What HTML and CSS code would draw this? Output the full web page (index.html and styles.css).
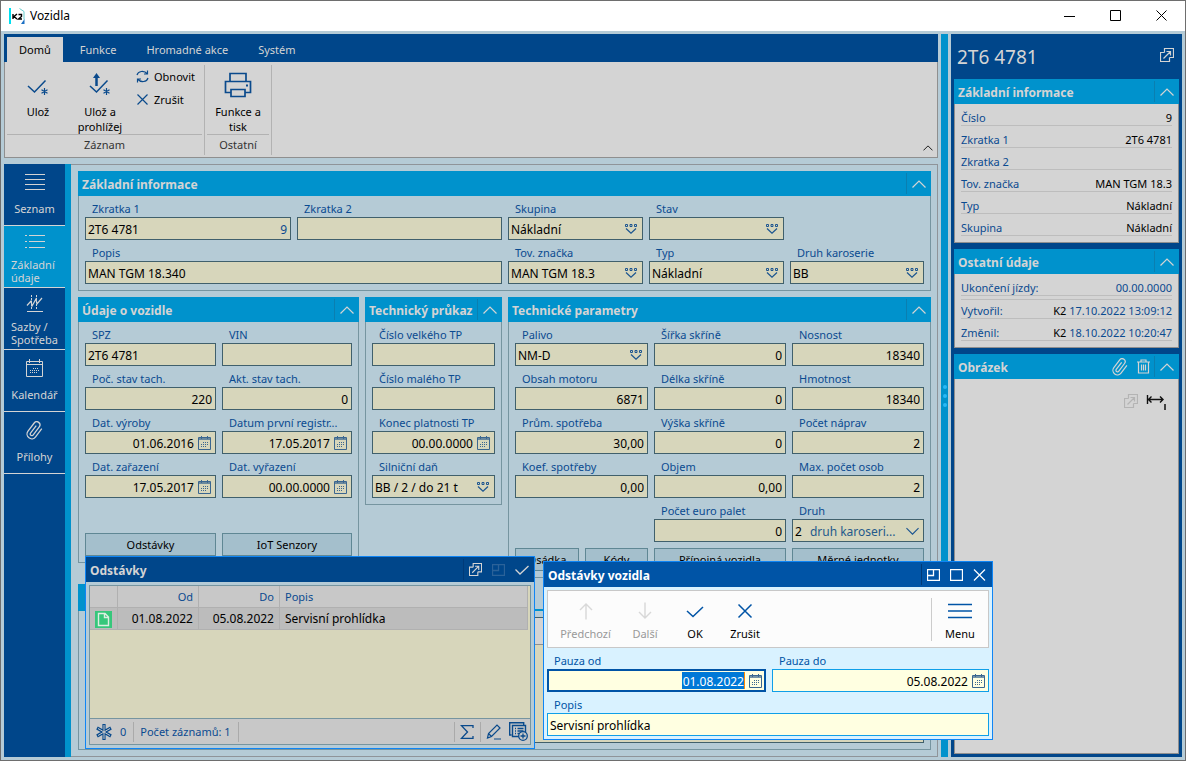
FILE: index.html
```html
<!DOCTYPE html>
<html lang="cs">
<head>
<meta charset="utf-8">
<title>Vozidla</title>
<link rel="stylesheet" href="styles.css">
</head>
<body>
<svg class="sprite" aria-hidden="true">
  <symbol id="cal" viewBox="0 0 13 14">
    <path d="M.5 1.500h12v12H.5z" fill="none" stroke="currentColor"/>
    <path d="M1 3h11" fill="none" stroke="currentColor" stroke-width="2" opacity=".7"/>
    <path d="M3.500 0v3M9.500 0v3" stroke="currentColor"/>
    <path d="M5 6.500h6M3 8.500h8M3 10.500h6" fill="none" stroke="currentColor" stroke-dasharray="1 1"/>
  </symbol>
  <symbol id="look" viewBox="0 0 13 10">
    <path d="M.5 .5h2v2h-2zM5 .5h2v2H5zM9.500 .5h2v2h-2z" fill="none" stroke="currentColor"/>
    <path d="M1 4.500l5 4.700 5-4.700" fill="none" stroke="currentColor" stroke-width="1.200"/>
  </symbol>
  <symbol id="up" viewBox="0 0 14 8"><path d="M.5 7.500L7 1l6.500 6.500" fill="none" stroke="currentColor" stroke-width="1.200"/></symbol>
  <symbol id="out" viewBox="0 0 14 14">
    <path d="M4.500 4.500h-4v9h9v-4M4.500 4.500v-4h9v9h-4M3.500 10.500l6.500-6.500M6.500 3.500h4v4" fill="none" stroke="currentColor" stroke-width="1.200"/>
  </symbol>
  <symbol id="clip" viewBox="0 0 24 24">
    <path d="M21.440 11.050l-9.190 9.190a6 6 0 0 1-8.490-8.490l9.190-9.190a4 4 0 0 1 5.660 5.660l-9.200 9.190a2 2 0 0 1-2.830-2.830l8.490-8.480" fill="none" stroke="currentColor" stroke-width="1.600" transform="rotate(-8 12 12)"/>
  </symbol>
  <symbol id="split" viewBox="0 0 13 12"><path d="M.5.500h12v11H.5zM.5 6.500h6v-6" fill="none" stroke="currentColor" stroke-width="1.300"/></symbol>
</svg>

<div class="window">
  <header class="titlebar">
    <svg class="logo" width="16" height="17" viewBox="0 0 16 17">
      <path d="M0 0h2v16H0z" fill="#00dff0"/>
      <path d="M10.500.5l4.500 3v8" fill="none" stroke="#6cc" />
      <path d="M12 16l3.500-5v5z" fill="#1a6fc4"/>
      <path d="M4 6v5M8 6L5 8.500 8 11M9.500 6.500H12.500v2l-3 2.500h3.500" fill="none" stroke="#000" stroke-width="1.400"/>
    </svg>
    <h1>Vozidla</h1>
    <button aria-label="Minimalizovat"><svg width="12" height="12"><path d="M0 6.500h11" stroke="#000"/></svg></button>
    <button aria-label="Maximalizovat"><svg width="12" height="12"><path d="M.5.500h10v10H.5z" fill="none" stroke="#000"/></svg></button>
    <button aria-label="Zavřít"><svg width="12" height="12"><path d="M.5.500l10 10M10.500.500l-10 10" stroke="#000"/></svg></button>
  </header>

  <div class="workspace">
    <div class="left">
      <div class="ribbon">
        <nav class="tabs">
          <button class="tab on">Domů</button><button class="tab">Funkce</button><button class="tab">Hromadné akce</button><button class="tab">Systém</button>
        </nav>
        <div class="ribbon-body">
          <section class="group">
            <div class="tools">
              <button class="tool save"><svg width="28" height="28" viewBox="0 0 28 28"><path d="M4 15l6.500 6L21.500 9.500" fill="none" stroke="#0a4a8c" stroke-width="1.500"/><path d="M20.500 17v7M17.500 18.700l6 3.500M23.500 18.700l-6 3.500" stroke="#0a4a8c" stroke-width="1.200"/></svg>Ulož</button>
              <button class="tool view"><svg width="28" height="28" viewBox="0 0 28 28"><path d="M4 15l6.500 6L21.500 9.500" fill="none" stroke="#0a4a8c" stroke-width="1.500"/><path d="M10.500 15V5" stroke="#0a4a8c" stroke-width="2.500"/><path d="M7 7l3.500-5L14 7z" fill="#0a4a8c"/><path d="M20.500 17v7M17.500 18.700l6 3.500M23.500 18.700l-6 3.500" stroke="#0a4a8c" stroke-width="1.200"/></svg>Ulož a prohlížej</button>
              <div class="minis">
                <button class="mini"><svg width="13" height="13" viewBox="0 0 13 13"><path d="M1 5c1-4 7-5 10.500-1M11.500.500V4H8M12 8c-1 4-7 5-10.500 1M1.500 12.500V9H5" fill="none" stroke="#0a4a8c" stroke-width="1.200"/></svg>Obnovit</button>
                <button class="mini"><svg width="13" height="13" viewBox="0 0 13 13"><path d="M1.500 1.500l10 10M11.500 1.500l-10 10" stroke="#0a4a8c" stroke-width="1.200"/></svg>Zrušit</button>
              </div>
            </div>
            <h2>Záznam</h2>
          </section>
          <section class="group">
            <div class="tools">
              <button class="tool print"><svg width="28" height="28" viewBox="0 0 28 28"><path d="M6 10V2.500h16V10M6.500 21.500H1.500V10.500h25v11h-5M7 18.500h14v7H7z" fill="none" stroke="#0a4a8c" stroke-width="1.700"/><path d="M22 14.500h2" stroke="#0a4a8c" stroke-width="2"/></svg>Funkce a tisk</button>
            </div>
            <h2>Ostatní</h2>
          </section>
          <button class="fold" aria-label="Sbalit pás"><svg width="10" height="6" viewBox="0 0 14 8"><use href="#up"/></svg></button>
        </div>
      </div>

      <div class="main">
        <nav class="side">
          <a href="#seznam"><svg width="22" height="19" viewBox="0 0 22 19"><path d="M1 1.500h20M1 6.500h20M1 11.500h20M1 16.500h20" stroke="currentColor" stroke-width="1.200"/></svg><span>Seznam</span></a>
          <a href="#udaje" class="on wide"><svg width="22" height="19" viewBox="0 0 22 19"><path d="M5 2.500h16M5 8.500h16M5 14.500h16M1 2.500h2M1 8.500h2M1 14.500h2" stroke="currentColor"/></svg><span>Základní údaje</span></a>
          <a href="#sazby" class="wide"><svg width="17" height="19" viewBox="0 0 17 19"><path d="M1 16.500h16" stroke="currentColor"/><path d="M1 10.500l4-4.500 1 5 4-7 1 5 5-6" fill="none" stroke="currentColor" stroke-width="1.200"/><path d="M5.500 0v15M10.500 0v15" stroke="currentColor" stroke-dasharray="2 1"/></svg><span>Sazby / Spotřeba</span></a>
          <a href="#kalendar"><svg width="17" height="19" viewBox="0 0 17 19"><path d="M.5 2.500h16v15H.5zM.5 5.500h16M3.500 0v4M13.500 0v4" fill="none" stroke="currentColor"/><path d="M7 9.500h6M4 11.500h9M4 13.500h7" fill="none" stroke="currentColor" stroke-dasharray="1 1"/></svg><span>Kalendář</span></a>
          <a href="#prilohy"><svg width="19" height="19"><use href="#clip"/></svg><span>Přílohy</span></a>
        </nav>

        <div class="content">
          <section class="panel">
            <h2><span>Základní informace</span><button aria-label="Sbalit"><svg width="14" height="8"><use href="#up"/></svg></button></h2>
            <div class="body g5">
              <label>Zkratka 1<span class="f"><input value="2T6 4781"><em>9</em></span></label>
              <label>Zkratka 2<span class="f"><input></span></label>
              <label>Skupina<span class="f"><input value="Nákladní"><svg class="lk"><use href="#look"/></svg></span></label>
              <label>Stav<span class="f"><input><svg class="lk"><use href="#look"/></svg></span></label>
              <i></i>
              <label class="s2">Popis<span class="f"><input value="MAN TGM 18.340"></span></label>
              <label>Tov. značka<span class="f"><input value="MAN TGM 18.3"><svg class="lk"><use href="#look"/></svg></span></label>
              <label>Typ<span class="f"><input value="Nákladní"><svg class="lk"><use href="#look"/></svg></span></label>
              <label>Druh karoserie<span class="f"><input value="BB"><svg class="lk"><use href="#look"/></svg></span></label>
            </div>
          </section>

          <div class="trio">
            <section class="panel">
              <h2><span>Údaje o vozidle</span><button aria-label="Sbalit"><svg width="14" height="8"><use href="#up"/></svg></button></h2>
              <div class="body g2">
                <label>SPZ<span class="f"><input value="2T6 4781"></span></label>
                <label>VIN<span class="f"><input></span></label>
                <label>Poč. stav tach.<span class="f n"><input value="220"></span></label>
                <label>Akt. stav tach.<span class="f n"><input value="0"></span></label>
                <label>Dat. výroby<span class="f n"><input value="01.06.2016"><svg class="cl"><use href="#cal"/></svg></span></label>
                <label>Datum první registr...<span class="f n"><input value="17.05.2017"><svg class="cl"><use href="#cal"/></svg></span></label>
                <label>Dat. zařazení<span class="f n"><input value="17.05.2017"><svg class="cl"><use href="#cal"/></svg></span></label>
                <label>Dat. vyřazení<span class="f n"><input value="00.00.0000"><svg class="cl"><use href="#cal"/></svg></span></label>
                <button class="btn low">Odstávky</button><button class="btn low">IoT Senzory</button>
              </div>
            </section>
            <section class="panel">
              <h2><span>Technický průkaz</span><button aria-label="Sbalit"><svg width="14" height="8"><use href="#up"/></svg></button></h2>
              <div class="body">
                <label>Číslo velkého TP<span class="f"><input></span></label>
                <label>Číslo malého TP<span class="f"><input></span></label>
                <label>Konec platnosti TP<span class="f n"><input value="00.00.0000"><svg class="cl"><use href="#cal"/></svg></span></label>
                <label>Silniční daň<span class="f"><input value="BB / 2 / do 21 t"><svg class="lk"><use href="#look"/></svg></span></label>
              </div>
            </section>
            <section class="panel">
              <h2><span>Technické parametry</span><button aria-label="Sbalit"><svg width="14" height="8"><use href="#up"/></svg></button></h2>
              <div class="body g3">
                <label>Palivo<span class="f"><input value="NM-D"><svg class="lk"><use href="#look"/></svg></span></label>
                <label>Šířka skříně<span class="f n"><input value="0"></span></label>
                <label>Nosnost<span class="f n"><input value="18340"></span></label>
                <label>Obsah motoru<span class="f n"><input value="6871"></span></label>
                <label>Délka skříně<span class="f n"><input value="0"></span></label>
                <label>Hmotnost<span class="f n"><input value="18340"></span></label>
                <label>Prům. spotřeba<span class="f n"><input value="30,00"></span></label>
                <label>Výška skříně<span class="f n"><input value="0"></span></label>
                <label>Počet náprav<span class="f n"><input value="2"></span></label>
                <label>Koef. spotřeby<span class="f n"><input value="0,00"></span></label>
                <label>Objem<span class="f n"><input value="0,00"></span></label>
                <label>Max. počet osob<span class="f n"><input value="2"></span></label>
                <i></i>
                <label>Počet euro palet<span class="f n"><input value="0"></span></label>
                <label>Druh<span class="f sel"><b>2</b><select><option>druh karoseri...</option></select><svg class="dn" width="13" height="8" viewBox="0 0 14 8"><path d="M.5 1L7 7.500 13.500 1" fill="none" stroke="currentColor" stroke-width="1.200"/></svg></span></label>
                <div class="pair"><button class="btn">Osádka</button><button class="btn">Kódy</button></div>
                <button class="btn">Přípojná vozidla</button><button class="btn">Měrné jednotky</button>
              </div>
            </section>
          </div>

          <section class="sheet">
            <div class="sheet-tab"></div>
            <div class="sheet-body"><div class="sheet-grid"><div class="sheet-head"></div></div></div>
          </section>
        </div>
      </div>
    </div>

    <div class="splitter"><i></i><i></i><i></i></div>

    <aside class="preview">
      <header><h2>2T6 4781</h2><button aria-label="Otevřít"><svg width="14" height="14"><use href="#out"/></svg></button></header>
      <section class="panel">
        <h2><span>Základní informace</span><button aria-label="Sbalit"><svg width="14" height="8"><use href="#up"/></svg></button></h2>
        <dl class="body">
          <div><dt>Číslo</dt><dd>9</dd></div>
          <div><dt>Zkratka 1</dt><dd>2T6 4781</dd></div>
          <div><dt>Zkratka 2</dt><dd></dd></div>
          <div><dt>Tov. značka</dt><dd>MAN TGM 18.3</dd></div>
          <div><dt>Typ</dt><dd>Nákladní</dd></div>
          <div><dt>Skupina</dt><dd>Nákladní</dd></div>
        </dl>
      </section>
      <section class="panel">
        <h2><span>Ostatní údaje</span><button aria-label="Sbalit"><svg width="14" height="8"><use href="#up"/></svg></button></h2>
        <dl class="body">
          <div><dt>Ukončení jízdy:</dt><dd><a href="#d">00.00.0000</a></dd></div>
          <div class="gap"></div>
          <div class="tight"><dt>Vytvořil:</dt><dd>K2 <a href="#d">17.10.2022 13:09:12</a></dd></div>
          <div><dt>Změnil:</dt><dd>K2 <a href="#d">18.10.2022 10:20:47</a></dd></div>
        </dl>
      </section>
      <section class="panel grow">
        <h2><span>Obrázek</span>
          <svg width="18" height="18"><use href="#clip"/></svg>
          <svg class="bin" width="13" height="15" viewBox="0 0 13 15"><path d="M0 3h13M4 3V1h5v2M1.500 3v11h10V3M4.500 5.500v6M6.500 5.500v6M8.500 5.500v6" fill="none" stroke="currentColor" stroke-width="1.200"/></svg>
          <button aria-label="Sbalit"><svg width="14" height="8"><use href="#up"/></svg></button></h2>
        <div class="body picture">
          <svg class="dim" width="14" height="14"><use href="#out"/></svg>
          <svg width="20" height="16" viewBox="0 0 20 16"><path d="M1.500 1v9M2 5.500h15M5.500 2.500l-3 3 3 3M14 2.500l3 3-3 3" fill="none" stroke="#111" stroke-width="1.400"/><path d="M19 10v6" stroke="#111" stroke-width="1.500"/></svg>
        </div>
      </section>
    </aside>
  </div>

  <section class="popup list">
    <h2><span>Odstávky</span><i class="bar"></i>
      <button aria-label="Otevřít"><svg width="13" height="13"><use href="#out"/></svg></button>
      <button class="off" aria-label="Rozdělit"><svg width="13" height="12"><use href="#split"/></svg></button>
      <button aria-label="Potvrdit"><svg width="14" height="10" viewBox="0 0 14 10"><path d="M.5 4.500L5 9l8.500-8" fill="none" stroke="currentColor" stroke-width="1.300"/></svg></button></h2>
    <div class="frame">
      <table>
        <colgroup><col class="c1"><col class="c2"><col class="c2"><col></colgroup>
        <thead><tr><th></th><th class="r">Od</th><th class="r">Do</th><th>Popis</th></tr></thead>
        <tbody><tr><td><svg class="doc" width="17" height="17" viewBox="0 0 17 17"><path d="M0 0h17v17H0z" fill="#36c77b"/><path d="M3.500 2.500h6.500l3.500 3.500v8.500h-10zM9.500 2.500v4h4" fill="none" stroke="#dceee2" stroke-width="1.400"/></svg></td><td class="r">01.08.2022</td><td class="r">05.08.2022</td><td>Servisní prohlídka</td></tr></tbody>
      </table>
      <footer>
        <svg width="16" height="16" viewBox="0 0 16 16"><path d="M8 0v16M1 4l14 8M15 4L1 12" stroke="#0a4a8c" stroke-width="3.200"/><path d="M8 1v14M2 4.500l12 7M14 4.500l-12 7" stroke="#c8c8c8" stroke-width="1"/></svg>
        <span class="num">0</span><span class="count">Počet záznamů: 1</span>
        <span class="sum"><svg width="14" height="14" viewBox="0 0 14 14"><path d="M13 3V.7H1.500l6 6.300-6 6.300H13V11" fill="none" stroke="#0a4a8c" stroke-width="1.300"/></svg></span>
        <svg class="pen" width="16" height="16" viewBox="0 0 16 16"><path d="M1.500 14l1-4.500L11 1l3 3-8.500 8.500zM2.500 9.500l3 3M8 15h7" fill="none" stroke="#0a4a8c" stroke-width="1.200"/></svg>
        <svg class="add" width="19" height="19" viewBox="0 0 19 19"><path d="M2.500 13H.7V.7h14V3M3.500 3.500h13v11h-13zM6 6.500h1M8.500 6.500h6M6 9h1M8.500 9h6M6 11.500h1M8.500 11.500h3" fill="none" stroke="#0a4a8c" stroke-width="1.400"/><circle cx="14" cy="14" r="4.300" fill="#c8c8c8" stroke="#0a4a8c" stroke-width="1.300"/><path d="M11.500 14h5M14 11.500v5" stroke="#0a4a8c" stroke-width="1.300"/></svg>
      </footer>
    </div>
  </section>

  <section class="popup dialog">
    <h2><span>Odstávky vozidla</span><i class="bar"></i>
      <button aria-label="Rozdělit"><svg width="13" height="12"><use href="#split"/></svg></button>
      <button aria-label="Maximalizovat"><svg width="13" height="12" viewBox="0 0 13 12"><path d="M.5.500h12v11H.5z" fill="none" stroke="currentColor" stroke-width="1.300"/></svg></button>
      <button aria-label="Zavřít"><svg width="13" height="12" viewBox="0 0 13 12"><path d="M1 .5l11 11M12 .5l-11 11" stroke="currentColor" stroke-width="1.200"/></svg></button></h2>
    <div class="toolbar">
      <button class="b1" disabled><svg width="16" height="18"><path d="M8 17.500V2M2 8l6-6 6 6" fill="none" stroke="#d8d8d8" stroke-width="1.400"/></svg>Předchozí</button>
      <button class="b2" disabled><svg width="16" height="18"><path d="M8 .5V16M2 10l6 6 6-6" fill="none" stroke="#d8d8d8" stroke-width="1.400"/></svg>Další</button>
      <button class="b3"><svg width="18" height="18"><path d="M1 9l6 5.500L17 5" fill="none" stroke="#0054a6" stroke-width="1.500"/></svg>OK</button>
      <button class="b4"><svg width="16" height="18"><path d="M1.500 2.500l13 13M14.500 2.500l-13 13" stroke="#0054a6" stroke-width="1.500"/></svg>Zrušit</button>
      <button class="menu"><svg width="24" height="18"><path d="M0 2.500h24M0 9h24M0 15.500h24" stroke="#0054a6" stroke-width="1.500"/></svg>Menu</button>
    </div>
    <div class="form">
      <label>Pauza od<span class="f n focus"><input class="picked" value="01.08.2022"><svg class="cl"><use href="#cal"/></svg></span></label>
      <label>Pauza do<span class="f n"><input value="05.08.2022"><svg class="cl"><use href="#cal"/></svg></span></label>
      <label class="s2">Popis<span class="f"><input value="Servisní prohlídka"></span></label>
    </div>
  </section>
</div>
</body>
</html>
```
FILE: styles.css
```css
* { box-sizing: border-box; margin: 0; padding: 0; }
:root {
  --navy: #00468a;
  --cyan: #0092cc;
  --pale: #b5cbd6;
  --gray: #d4d4d4;
  --field: #d7d6bb;
}
body { font: 12px/16px "Noto Sans", "Open Sans", sans-serif; color: #000; }
button, input, select { font: inherit; color: inherit; background: none; border: 0; }
input, select { min-width: 0; outline: 0; }
a { color: inherit; text-decoration: none; }
svg { flex: none; }
.sprite { display: none; }

.window { position: relative; display: flex; flex-direction: column; height: 100vh; overflow: hidden; border: 1px solid #6e6e6e; background: var(--pale); }
.titlebar { display: flex; align-items: center; height: 30px; padding-left: 8px; background: #fff; }
.titlebar h1 { flex: 1; margin-left: 5px; font-size: 12px; font-weight: 400; }
.titlebar button { width: 46px; height: 28px; line-height: 0; }

.workspace { flex: 1; min-height: 0; display: flex; gap: 3px; padding: 3px; }
.left { flex: 1; min-width: 0; display: flex; flex-direction: column; gap: 6px; }

.tabs { display: flex; height: 28px; padding: 3px 3px 0; background: var(--navy); }
.tab { padding: 0 15px; color: var(--gray); font-size: 11px; }
.tab.on { padding: 0 12px; margin-right: 2px; background: var(--gray); color: #000; }
.ribbon-body { position: relative; display: flex; height: 96px; padding: 3px 3px 2px 2px; border: 1px solid #8f8f8f; border-top: 0; background: var(--gray); }
.group { display: flex; flex-direction: column; padding-right: 2px; margin-right: 2px; border-right: 1px solid #b2b2b2; }
.tools { display: flex; flex: 1; border-bottom: 1px solid #b2b2b2; }
.group h2 { height: 20px; font-size: 11px; line-height: 20px; font-weight: 400; color: #333; text-align: center; }
.tool { display: flex; flex-direction: column; align-items: center; justify-content: flex-start; padding-top: 6px; font-size: 11px; line-height: 15px; }
.tool svg { margin-bottom: 5px; }
.save, .view, .print { width: 62px; }
.minis { width: 71px; display: flex; flex-direction: column; padding-left: 5px; }
.mini { display: flex; align-items: center; gap: 5px; height: 23px; font-size: 11px; }
.fold { position: absolute; right: 4px; bottom: 6px; line-height: 0; }

.main { flex: 1; min-height: 0; display: flex; }
.side { width: 67px; border-right: 6px solid var(--cyan); background: var(--navy); color: var(--gray); font-size: 11px; line-height: 13px; }
.side a { display: flex; flex-direction: column; align-items: center; height: 62px; padding-top: 9px; border-bottom: 1px solid var(--gray); }
.side a.on { background: var(--cyan); }
.side span { margin-top: 10px; }
.side .wide { padding-top: 7px; }
.side .wide span { align-self: stretch; padding-left: 7px; margin-top: 6px; }

.content { flex: 1; min-width: 0; display: flex; flex-direction: column; gap: 6px; padding: 6px 6px 6px 7px; border: 1px solid #8f9499; border-left: 0; }
.panel > h2 { display: flex; align-items: center; height: 25px; padding-left: 4px; background: var(--cyan); color: var(--gray); font-size: 12px; white-space: nowrap; }
.panel > h2 span { flex: 1; min-width: 0; padding-top: 2px; }
.panel > h2 button { width: 25px; height: 21px; padding-right: 1px; border-left: 1px solid #0a7fb0; line-height: 0; }
.panel .body { padding: 0 6px 6px; border: 1px solid #7695a0; border-top: 0; }
.g5, .g2, .g3 { display: grid; column-gap: 6px; }
.g5 { grid-template-columns: 206fr 205fr 135fr 135fr 134fr; }
.g2 { grid-template-columns: 131fr 130fr; }
.g3 { grid-template-columns: 133fr 132fr 132fr; }
.s2 { grid-column: span 2; }
.trio { display: grid; grid-template-columns: 281fr 137fr 423fr; gap: 6px; align-items: start; }

label { display: block; min-width: 0; padding-top: 5px; color: #0a4a90; font-size: 11px; line-height: 16px; text-indent: 7px; white-space: nowrap; }
.f { display: flex; align-items: center; height: 23px; padding: 0 3px 0 2px; border: 1px solid #40606c; background: var(--field); color: #000; font-size: 12px; text-indent: 0; }
.f input { flex: 1; width: 0; height: 21px; padding-top: 2px; }
.f em { padding-top: 2px; font-style: normal; color: #0a4a90; }
.n input { text-align: right; }
.lk { width: 13px; height: 10px; margin-right: 1px; color: #1c5590; }
.cl { width: 13px; height: 14px; margin: 0 1px 0 4px; color: #3a6690; }
.sel { gap: 8px; }
.sel b { padding-top: 2px; font-weight: 400; }
.sel select { flex: 1; width: 0; padding-top: 2px; appearance: none; color: #245a8c; }
.dn { margin-right: 1px; color: #1c5590; }
.btn { height: 23px; border: 1px solid #5f8794; background: #a4bfcc; font-size: 11px; }
.g3 .btn { margin-top: 6px; }
.g2 .low { margin-top: 35px; }
.pair { display: grid; grid-template-columns: 64fr 63fr; gap: 6px; }

.sheet { flex: 1; min-height: 0; display: flex; flex-direction: column; border-bottom: 1px solid #7695a0; }
.sheet-tab { height: 27px; border-bottom: 2px solid var(--cyan); border-left: 60px solid var(--cyan); }
.sheet-body { flex: 1; padding: 6px; border: solid #7695a0; border-width: 0 1px; }
.sheet-grid { height: 100%; border: 1px solid #40606c; background: var(--field); }
.sheet-head { height: 27px; border-bottom: 1px solid #8f8f8f; background: var(--gray); }

.splitter { width: 7px; display: flex; flex-direction: column; align-items: center; justify-content: center; gap: 5px; background: var(--cyan); }
.splitter i { width: 4px; height: 4px; border-radius: 50%; background: #2ab8f5; }

.preview { width: 231px; display: flex; flex-direction: column; gap: 6px; padding: 3px; background: var(--navy); }
.preview header { display: flex; align-items: center; justify-content: space-between; height: 36px; padding: 4px 5px 0 3px; color: var(--gray); }
.preview header h2 { font-size: 19px; font-weight: 400; }
.preview .body { padding: 0 6px 6px; border: 1px solid #8f8f8f; border-top: 0; background: var(--gray); font-size: 11px; }
.preview dl div { display: flex; justify-content: space-between; align-items: flex-end; height: 22px; border-bottom: 1px solid #bdbdbd; line-height: 14px; white-space: nowrap; }
.preview dl .gap { height: 4px; }
.preview dl .tight { height: 19px; }
.preview dt, .preview dd a { color: #0a4a90; }
.bin { margin: 0 4px 0 8px; }
.grow { flex: 1; display: flex; flex-direction: column; }
.preview .picture { flex: 1; display: flex; justify-content: flex-end; align-items: flex-start; gap: 8px; padding: 15px 12px 0; }
.dim { color: #b4b4b4; }

.popup { position: absolute; width: 450px; border: 1px solid #0f85f5; }
.popup h2 { display: flex; align-items: center; height: 25px; padding: 0 1px 0 4px; font-size: 12px; }
.popup h2 span { flex: 1; padding-top: 2px; }
.popup h2 button { width: 23px; line-height: 0; }
.popup h2 .off { opacity: .2; }
.bar { width: 1px; height: 21px; background: #003a78; }
.list { left: 84px; top: 555px; height: 193px; display: flex; flex-direction: column; background: var(--pale); }
.list h2 { background: var(--navy); color: var(--gray); }
.frame { flex: 1; display: flex; flex-direction: column; margin: 3px; border: 1px solid #7695a0; background: var(--field); }
table { width: calc(100% - 2px); table-layout: fixed; border-collapse: separate; border-spacing: 0; font-size: 12px; line-height: 20px; }
.c1 { width: 28px; }
.c2 { width: 81px; }
th, td { height: 22px; padding: 1px 5px 0; border: solid #b0b0b0; border-width: 0 1px 1px 0; text-align: left; font-weight: 400; background: #c8c8c8; }
th { color: #0a4a90; font-size: 11px; }
td { background: #bcbcbc; }
th.r, td.r { text-align: right; }
.doc { display: block; }
.frame footer { display: flex; align-items: center; height: 26px; margin-top: auto; padding: 0 2px 0 6px; border-top: 1px solid #7695a0; background: #c8c8c8; color: #0a4a90; font-size: 11px; }
.num { padding: 2px 7px 2px 8px; border-right: 1px solid #aaa; }
.count { padding: 2px 7px 2px 6px; border-right: 1px solid #aaa; }
.sum { display: flex; margin-left: auto; padding: 3px 6px 3px 5px; border: solid #aaa; border-width: 0 1px; }
.pen { margin: 0 7px 0 5px; }

.dialog { left: 542px; top: 560px; background: #d9f2ff; padding-bottom: 3px; }
.dialog h2 { background: #0054a6; color: #fff; }
.toolbar { display: flex; height: 58px; margin: 3px 3px 0; padding: 7px 0 6px; border: 1px solid #c8c8c8; background: #fcfcfc; font-size: 11px; }
.toolbar button { display: flex; flex-direction: column; align-items: center; gap: 6px; padding-top: 4px; }
.toolbar button:disabled { color: #999; }
.b1 { width: 75px; }
.b2 { width: 44px; }
.b3 { width: 56px; }
.b4 { width: 44px; }
.menu { width: 57px; margin-left: auto; border-left: 1px solid #ccc; }
.form { display: grid; grid-template-columns: 219fr 217fr; column-gap: 6px; padding: 0 3px; }
.form label { color: #0054a6; }
.form .f { border-color: #0f9fe8; background: #ffffe1; padding: 0 2px; }
.form .focus { border: 2px solid #0054a6; padding: 0 1px; }
.form .focus .picked { flex: none; width: 63px; height: 17px; padding-top: 1px; margin-left: auto; background: #0078d7; color: #fff; border-right: 1px solid #f80; }
```
